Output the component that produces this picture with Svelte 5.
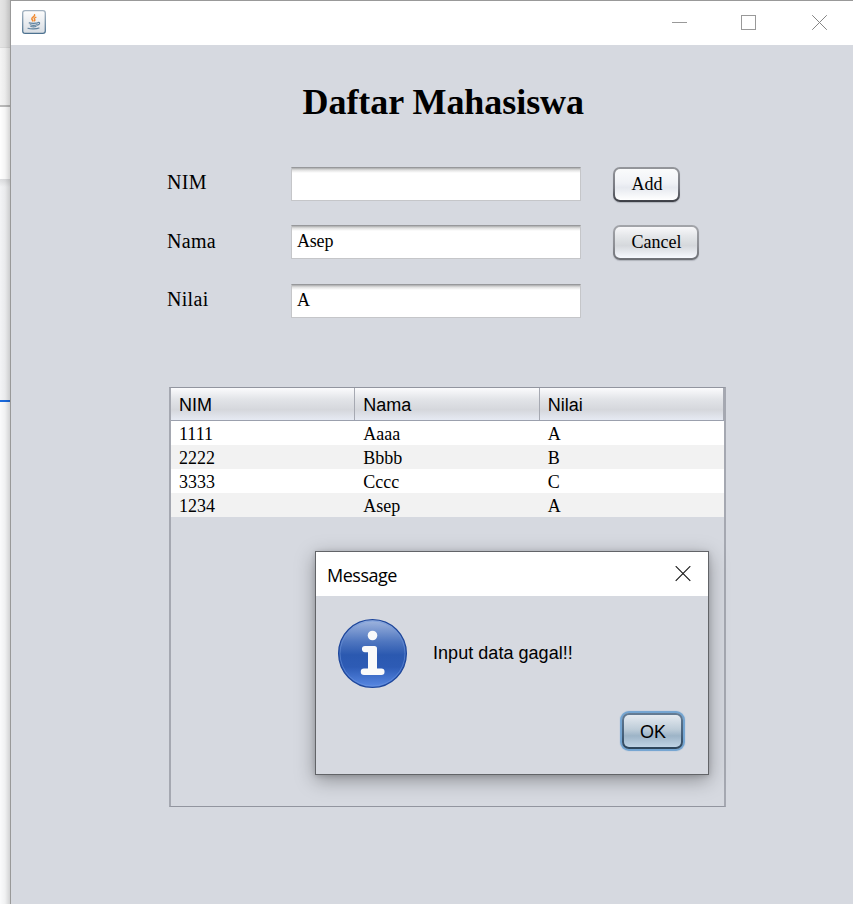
<script>
  const fields = [
    { label: 'NIM', value: '', button: 'Add', kind: 'add' },
    { label: 'Nama', value: 'Asep', button: 'Cancel', kind: 'cancel' },
    { label: 'Nilai', value: 'A' }
  ];
  const columns = ['NIM', 'Nama', 'Nilai'];
  const rows = [
    ['1111', 'Aaaa', 'A'],
    ['2222', 'Bbbb', 'B'],
    ['3333', 'Cccc', 'C'],
    ['1234', 'Asep', 'A']
  ];
</script>

<div class="screen">
  <div class="behind">
    <div class="strip top"></div>
    <div class="strip bar"></div>
    <div class="strip white"></div>
    <div class="strip body"></div>
    <div class="strip rest"></div>
  </div>

  <main class="window">
    <header class="titlebar">
      <svg class="java" width="24" height="24" viewBox="0 0 24 24">
        <defs>
          <linearGradient id="cupbg" x1="0" y1="0" x2="0" y2="1">
            <stop offset="0" stop-color="#fdfdfd" />
            <stop offset="1" stop-color="#d8dde3" />
          </linearGradient>
          <linearGradient id="cupedge" x1="0" y1="0" x2="0" y2="1">
            <stop offset="0" stop-color="#a3b2c0" />
            <stop offset="1" stop-color="#4d7290" />
          </linearGradient>
        </defs>
        <rect x=".7" y=".7" width="22.6" height="22.6" rx="2.4" fill="url(#cupbg)" stroke="url(#cupedge)" stroke-width="1.3" />
        <g fill="none" stroke-linecap="round">
          <path d="M12.600 4.800c.8 1.700-3.200 2.500-2.800 4.200.2.800 1 1.200 1 1.900M13.800 7.400c-2 .8-1.800 1.400-1.100 2.100.3.400.2.900-.3 1.300" stroke="#f08a30" stroke-width="1.500" />
          <path d="M7.200 12.900c1.600.6 6.800.6 8.300 0M8.200 14.800c2 .6 5.200.5 6.700-.1M8.800 16.500c1.700.4 3.700.4 5.200 0M15.800 12.500c2.600-.6 2.300 2.200-.4 2.600M6 18.300c2.600.9 8.800.8 11-.3" stroke="#5f829e" stroke-width="1.150" />
        </g>
      </svg>
      <svg class="controls" width="155" height="16" viewBox="0 0 155 16" fill="none" stroke="#999">
        <path d="M0 8.500H15" />
        <rect x="69.500" y="1.500" width="14" height="14" />
        <path d="M140.200 1.200l14.600 14.600M154.800 1.200L140.200 15.800" stroke="#858585" />
      </svg>
    </header>

    <h1>Daftar Mahasiswa</h1>

    <form>
      {#each fields as f}
        <div class="field">
          <span class="label">{f.label}</span>
          <div class="input">{f.value}</div>
          {#if f.button}
            <button type="button" class={f.kind}>{f.button}</button>
          {/if}
        </div>
      {/each}
    </form>

    <section class="grid">
      <div class="row head">
        {#each columns as c}<div class="cell">{c}</div>{/each}
      </div>
      {#each rows as r}
        <div class="row">
          {#each r as v}<div class="cell">{v}</div>{/each}
        </div>
      {/each}
    </section>
  </main>

  <div class="dialog">
    <div class="dialog-title">
      <span>Message</span>
      <svg width="16" height="16" viewBox="0 0 16 16" stroke="#111" stroke-width="1.100"><path d="M.7 .2L15.300 14.800M15.300 .2L.7 14.800" /></svg>
    </div>
    <div class="message">
      <svg width="70" height="70" viewBox="0 0 70 70">
        <defs>
          <linearGradient id="info" x1="0" y1="0" x2="0" y2="1">
            <stop offset="0" stop-color="#a2b7df" />
            <stop offset=".32" stop-color="#5077c0" />
            <stop offset=".52" stop-color="#2b59b0" />
            <stop offset=".7" stop-color="#2d5bb5" />
            <stop offset="1" stop-color="#5989e4" />
          </linearGradient>
        </defs>
        <circle cx="34.500" cy="34.500" r="33.900" fill="url(#info)" stroke="#1d469b" stroke-width="1.200" />
        <circle cx="34.500" cy="34.500" r="32.500" fill="none" stroke="#6d95dd" stroke-opacity=".55" />
        <circle cx="34.500" cy="16.500" r="4.800" fill="#fafafa" />
        <path d="M27 27H36.500Q39 27 39 29.500V49.500H43.300A3.200 3.200 0 0 1 43.300 56H26A3.200 3.200 0 0 1 26 49.500H30V33.200H27A3.100 3.100 0 0 1 27 27Z" fill="#fafafa" />
      </svg>
      <span>Input data gagal!!</span>
    </div>
    <div class="actions"><button type="button" class="ok">OK</button></div>
  </div>
</div>

<style>
  :global(body) { margin: 0; }
  * { box-sizing: border-box; }
  .screen {
    position: relative;
    display: flex;
    width: 853px;
    height: 904px;
    overflow: hidden;
    color: #000;
    background: #d6d9e0;
    font-family: "Liberation Serif", serif;
  }
  .behind {
    position: relative;
    width: 10px;
    display: flex;
    flex-direction: column;
  }
  .behind::after {
    content: "";
    position: absolute;
    inset: 0;
    background: linear-gradient(90deg, rgba(0,0,0,0), rgba(0,0,0,.04) 50%, rgba(0,0,0,.16));
  }
  .top { height: 48px; background: #e5e5e5; border-bottom: 1px solid #dcdcdc; }
  .bar { height: 59px; background: #f5f5f5; border-bottom: 2px solid #bbb; }
  .white { height: 72px; background: #fff; }
  .body { height: 223px; background: linear-gradient(#dcdddf, #f3f4f6 8px); border-bottom: 2px solid #1a6be0; }
  .rest { flex: 1; background: #fafbfc; }
  .window {
    width: 843px;
    border-left: 1px solid #999;
    border-top: 1px solid #999;
    display: flex;
    flex-direction: column;
    align-items: flex-start;
  }
  .titlebar {
    width: 100%;
    height: 44px;
    background: #fff;
    display: flex;
    justify-content: space-between;
    padding: 9px 26px 0 11px;
  }
  .controls { margin-top: 4px; }
  h1 {
    margin: 36px 0 0 291.500px;
    font-size: 36px;
    line-height: 42px;
    letter-spacing: -.05px;
    white-space: nowrap;
  }
  form {
    margin: 43px 0 0 156px;
    display: flex;
    flex-direction: column;
    gap: 22.500px;
  }
  .field { display: flex; height: 36px; }
  .label { width: 124px; font-size: 20px; line-height: 32px; letter-spacing: .3px; }
  .input {
    width: 290px;
    height: 34px;
    margin-top: .9px;
    border: 1px solid #c5c6c9;
    border-top: 1px solid #97989b;
    background: linear-gradient(#a9aaab, #dfdfdf 2px, #f5f5f5 4px, #fff 5px);
    padding: 0 5px;
    font-size: 18px;
    line-height: 31px;
    letter-spacing: -.2px;
  }
  button {
    font: 18px/33px "Liberation Serif", serif;
    color: #000;
    padding: 0;
    border: 2px solid transparent;
    border-radius: 7px;
    text-align: center;
  }
  .field button { margin: .5px 0 0 32px; height: 35px; line-height: 31px; padding-left: 1px; }
  .field .add {
    width: 67px;
    background: linear-gradient(#fafbfc, #f0f2f6 45%, #e6e9ef 60%, #fff) padding-box, linear-gradient(#94969b, #777981 60%, #3c3e45) border-box;
    box-shadow: 0 1px 1px #b0b3bb;
  }
  .field .cancel {
    width: 86px;
    background: linear-gradient(#f8f8fa, #e4e6e9 30%, #d5d8dc 60%, #f7f9ff) padding-box, linear-gradient(#a3a5aa, #8c8e94 60%, #6c6e74) border-box;
    box-shadow: 0 1px 1px #b0b3bb;
  }
  .grid {
    width: 557px;
    height: 420px;
    margin: 68px 0 0 158px;
    border: 1px solid #92959f;
    border-left-width: 2px;
    border-right-width: 2px;
    border-left-color: #a5a8b1;
    border-right-color: #a5a8b1;
    font-size: 18px;
  }
  .row { display: flex; height: 24px; background: #fff; line-height: 26px; }
  .row:nth-child(odd) { background: #f2f2f2; }
  .row.head {
    height: 33px;
    line-height: 34px;
    font-family: "Liberation Sans", sans-serif;
    background: linear-gradient(#fbfbfd, #e2e4e8 35%, #d5d7dc 68%, #e6eaf3);
    border-bottom: 1px solid #9ba0ad;
  }
  .cell { flex: 1; padding-left: 8px; }
  .head .cell { border-right: 1px solid #a6a9b2; }
  .dialog {
    position: absolute;
    left: 315px;
    top: 551px;
    width: 394px;
    height: 224px;
    border: 1px solid #626468;
    background: #d6d9e0;
    box-shadow: 0 5px 18px rgba(0,0,0,.34), 0 1px 5px rgba(0,0,0,.15);
    font: 18px "Liberation Sans", sans-serif;
  }
  .dialog-title {
    height: 44px;
    background: #fff;
    display: flex;
    justify-content: space-between;
    padding: 14px 17px 0 11px;
    font: 18px/18px "Open Sans", sans-serif;
  }
  .dialog-title span { letter-spacing: -.5px; }
  .message { display: flex; align-items: center; gap: 25px; padding: 23px 0 0 22px; }
  .message span { padding-bottom: 2px; letter-spacing: .04px; }
  .actions { display: flex; justify-content: flex-end; padding: 24px 25px 0 0; }
  .ok {
    width: 61px;
    height: 36px;
    padding: 2px 0 0 1px;
    font: 18px/30px "Liberation Sans", sans-serif;
    border-radius: 7px;
    background: linear-gradient(#e5eaf0, #bdccd8 45%, #9db4c7 65%, #bfd3e5) padding-box, linear-gradient(#657c94, #46607a 60%, #2c445a) border-box;
    box-shadow: 0 0 0 1.500px #73a4d1, 0 0 1px 2px #73a4d1;
  }
</style>
